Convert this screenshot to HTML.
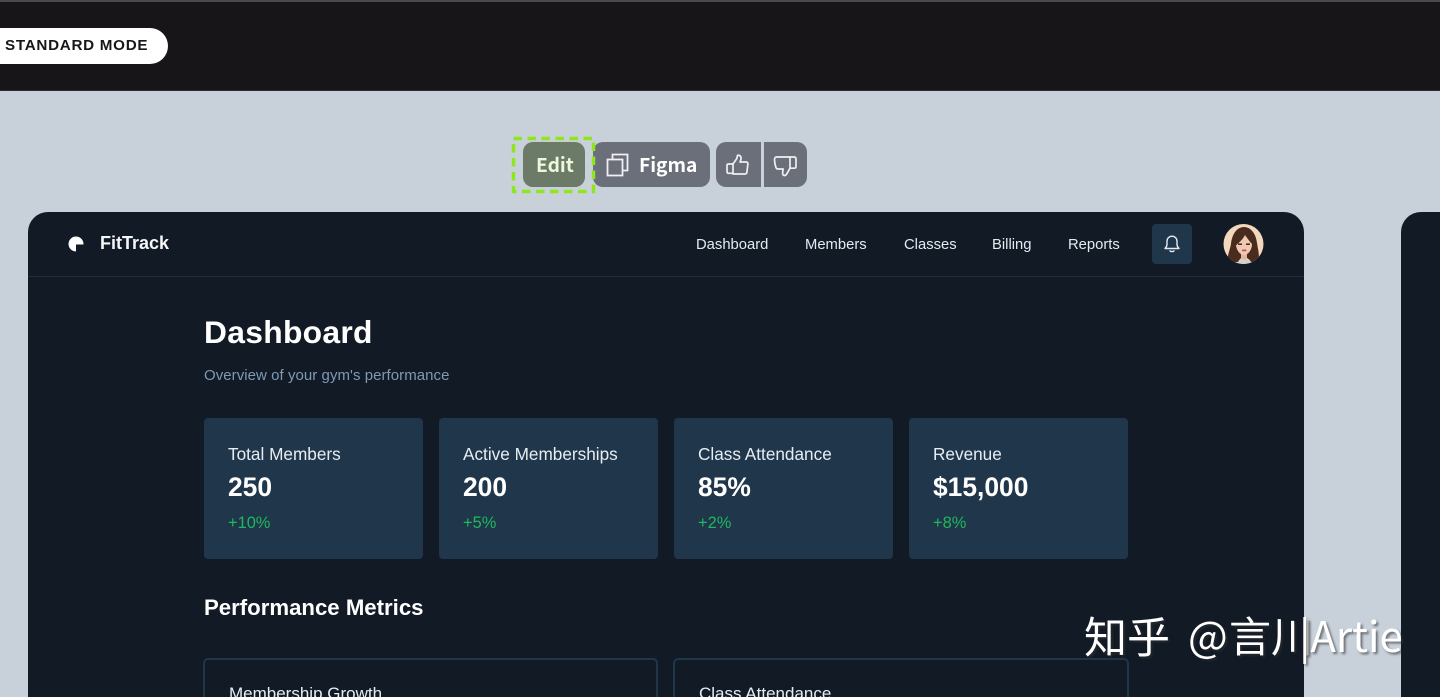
<!DOCTYPE html>
<html lang="en">
<head>
<meta charset="utf-8">
<title>FitTrack Dashboard</title>
<style>
html,body{margin:0;padding:0;width:1440px;height:697px;overflow:hidden;background:#c8d0da;}
body{position:relative;font-family:"Liberation Sans","Noto Sans CJK SC",sans-serif;}
#wrap{position:absolute;left:0;top:0;width:1440px;height:697px;overflow:hidden;}
.t{position:absolute;white-space:nowrap;line-height:1;}
.box{position:absolute;box-sizing:border-box;}
.card{position:absolute;top:418px;width:219px;height:141px;background:#20364b;border-radius:4px;}
.cl{position:absolute;left:24px;top:27px;font-size:17.2px;line-height:18px;color:#e6edf3;white-space:nowrap;}
.cv{position:absolute;left:24px;top:55px;font-size:26.4px;line-height:28px;font-weight:700;color:#fff;white-space:nowrap;}
.cd{position:absolute;left:24px;top:96px;font-size:16.4px;line-height:18px;color:#1fb85c;white-space:nowrap;}
.nav{position:absolute;top:237px;font-size:14.8px;line-height:16px;color:#e4eaf0;white-space:nowrap;}
.btn{position:absolute;top:142px;height:45px;background:#6b6f7a;}
.wm{position:absolute;white-space:nowrap;top:609px;font-size:42px;line-height:52px;color:#fff;text-shadow:2px 2px 2px rgba(50,50,50,.6);font-family:"Noto Sans CJK SC","Liberation Sans",sans-serif;}
.clip{position:absolute;overflow:hidden;height:39px;}
</style>
</head>
<body>
<div id="wrap">
<div class="box" style="left:0;top:0;width:1440px;height:91px;background:#171517;border-top:2px solid #4a494b;border-bottom:1px solid #2c2c2f;"></div>
<div class="box" style="left:0;top:28px;width:168px;height:36px;background:#fff;border-radius:0 18px 18px 0;"></div>
<div class="t" style="left:5px;top:37px;font-size:15.2px;line-height:17px;font-weight:700;letter-spacing:.72px;color:#15171b;">STANDARD MODE</div>

<div class="btn" style="left:523px;width:62px;background:#6c7a68;border-radius:10px;"></div>
<div class="t" style="left:536px;top:152px;font-size:19.2px;line-height:24px;font-weight:700;color:#eef6dc;font-family:'Noto Sans CJK SC',sans-serif;">Edit</div>
<div class="btn" style="left:593px;width:117px;border-radius:10px;"></div>
<div class="t" style="left:639px;top:152px;font-size:19.2px;line-height:24px;font-weight:700;color:#fff;font-family:'Noto Sans CJK SC',sans-serif;">Figma</div>
<svg style="position:absolute;left:604px;top:151px" width="28" height="28" viewBox="0 0 28 28" fill="none" stroke="#f0f0f2" stroke-width="1.800"><rect x="3.500" y="8.500" width="15" height="16"/><path d="M8.500 8.500V3.500h15v16h-5"/></svg>
<div class="btn" style="left:716px;width:45px;border-radius:10px 0 0 10px;"></div>
<div class="btn" style="left:764px;width:43px;border-radius:0 10px 10px 0;"></div>
<svg style="position:absolute;left:716px;top:142px" width="45" height="45" viewBox="716 142 45 45" fill="none" stroke="#f0f0f2" stroke-width="1.700" stroke-linejoin="round"><path d="M733 164h-4.500c-1 0-1.500.6-1.500 1.500v6c0 1 .6 1.800 1.800 1.800H733"/><path d="M733 174v-10l3.500-5c.6-1 .8-2 .8-3.300.8-.8 3-.5 3.600 1.300.4 1.500-.2 3.500-.9 5h6.300c1 0 1.700.8 1.600 1.800l-1 8.300c-.1 1.100-.9 1.900-2 1.900z"/></svg>
<svg style="position:absolute;left:764px;top:142px" width="43" height="45" viewBox="764 142 43 45" fill="none" stroke="#f0f0f2" stroke-width="1.700" stroke-linejoin="round"><path d="M776 157h18c1.200 0 2 .8 2 2v7.500c0 1-.7 1.700-1.700 1.700H790"/><path d="M790 157.500v10.700l-3 5.300c-.6 1.200-1.500 2-2.500 2-1.200 0-2-1-1.900-2.300l.5-4.200h-5c-1.100 0-1.800-.6-2.200-1.600-.8-2.500-1.400-5-1.400-7.900 0-1.500 1-2.500 2-2.500"/></svg>

<svg style="position:absolute;left:510px;top:135px" width="87" height="60" fill="none" stroke="#8ee61f" stroke-width="3.500"><rect x="3.500" y="3.500" width="80" height="53" stroke-dasharray="8.500 5.500"/></svg>

<div class="box" style="left:28px;top:212px;width:1276px;height:485px;background:#111a25;border-radius:20px 20px 0 0;"></div>
<div class="box" style="left:1401px;top:212px;width:39px;height:485px;background:#111a25;border-radius:20px 0 0 0;"></div>
<div class="box" style="left:28px;top:276px;width:1276px;height:1px;background:#1f2c39;"></div>

<svg style="position:absolute;left:68px;top:236px" width="16" height="16" viewBox="0 0 16 16"><path d="M8 .5A7.500 7.500 0 1 0 8 15.500V8.500h7.500A7.500 7.500 0 0 0 8 .5z" fill="#fff"/></svg>
<div class="t" style="left:100px;top:233px;font-size:18px;line-height:20px;font-weight:700;color:#f4f6f8;">FitTrack</div>
<div class="nav" style="left:696px;">Dashboard</div>
<div class="nav" style="left:805px;">Members</div>
<div class="nav" style="left:904px;">Classes</div>
<div class="nav" style="left:992px;">Billing</div>
<div class="nav" style="left:1068px;">Reports</div>
<div class="box" style="left:1152px;top:224px;width:40px;height:40px;background:#20364b;border-radius:4px;"></div>
<svg style="position:absolute;left:1162px;top:234px" width="20" height="20" viewBox="0 0 20 20" fill="none" stroke="#e3eaf1" stroke-width="1.400" stroke-linejoin="round" stroke-linecap="round"><path d="M3 14.500c1.200-1.200 2-2 2-4V7.200a5 5 0 0 1 10 0v3.300c0 2 .8 2.800 2 4z"/><path d="M8 16.800c.5 1 3.500 1 4 0"/></svg>
<svg style="position:absolute;left:1223px;top:224px" width="41" height="40" viewBox="0 0 41 40"><defs><clipPath id="c"><circle cx="20.500" cy="20" r="20"/></clipPath></defs><g clip-path="url(#c)"><rect width="41" height="40" fill="#f3d8bd"/><path d="M5 38c-1-7 2-12 3-18C9 10 14 3 21 3s12 7 13 16c1 7 3 12 1 19z" fill="#4a2c1f"/><path d="M14 40c1-3 3-5 4-6h6c2 1 4 3 5 6z" fill="#d6d2c8"/><path d="M18 28h6v6c-1 2-5 2-6 0z" fill="#e3b59c"/><path d="M13 20c0-6 3-9 8-9s8 3 8 9c0 6-4 11-8 11s-8-5-8-11z" fill="#f0c9b2"/><path d="M12 22c0-8 3-13 9-14 5 1 9 6 9 13-3-3-6-7-8-10-2 4-6 8-10 11z" fill="#4a2c1f"/><rect x="15" y="19.500" width="4" height="1.400" fill="#2f1c14"/><rect x="23" y="19.500" width="4" height="1.400" fill="#2f1c14"/><rect x="19" y="25.500" width="4.500" height="1.800" rx=".8" fill="#b8555a"/></g></svg>

<div class="t" style="left:204px;top:315px;font-size:31.8px;line-height:35px;font-weight:700;color:#fff;letter-spacing:.3px;">Dashboard</div>
<div class="t" style="left:204px;top:367px;font-size:15px;line-height:17px;color:#7f9ab5;letter-spacing:.05px;">Overview of your gym's performance</div>

<div class="card" style="left:204px;"><div class="cl">Total Members</div><div class="cv">250</div><div class="cd">+10%</div></div>
<div class="card" style="left:439px;"><div class="cl">Active Memberships</div><div class="cv">200</div><div class="cd">+5%</div></div>
<div class="card" style="left:674px;"><div class="cl">Class Attendance</div><div class="cv">85%</div><div class="cd">+2%</div></div>
<div class="card" style="left:909px;"><div class="cl">Revenue</div><div class="cv">$15,000</div><div class="cd">+8%</div></div>

<div class="t" style="left:204px;top:595px;font-size:22.2px;line-height:25px;font-weight:700;color:#fff;">Performance Metrics</div>

<div class="box clip" style="left:203px;top:658px;width:455px;border:2px solid #20364b;border-bottom:0;border-radius:5px 5px 0 0;"><div class="t" style="left:24px;top:27px;font-size:17px;line-height:14px;color:#e6edf3;">Membership Growth</div></div>
<div class="box clip" style="left:673px;top:658px;width:456px;border:2px solid #20364b;border-bottom:0;border-radius:5px 5px 0 0;"><div class="t" style="left:24px;top:27px;font-size:17px;line-height:14px;color:#e6edf3;">Class Attendance</div></div>

<div class="wm" style="left:1084px;font-size:43px;">知乎</div>
<div class="wm" style="left:1188px;">@</div>
<div class="wm" style="left:1229px;">言川</div>
<div class="wm" style="left:1299px;">|Artie</div>
</div>
</body>
</html>
